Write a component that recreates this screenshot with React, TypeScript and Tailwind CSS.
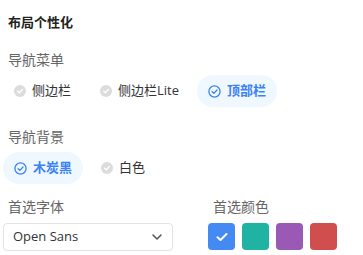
import { ChevronDown } from "lucide-react"

const font = { fontFamily: '"Open Sans", "Noto Sans CJK SC", sans-serif' }

function CheckIcon({ active }: { active: boolean }) {
  if (active) {
    return (
      <svg width="13" height="13" viewBox="0 0 14 14" className="shrink-0">
        <circle cx="7" cy="7" r="6" fill="none" stroke="#3b82f6" strokeWidth="1.4" />
        <path d="M4.4 7.2 L6.3 9 L9.7 5.4" fill="none" stroke="#3b82f6" strokeWidth="1.4" strokeLinecap="round" strokeLinejoin="round" />
      </svg>
    )
  }
  return (
    <svg width="12" height="12" viewBox="0 0 14 14" className="shrink-0">
      <circle cx="7" cy="7" r="7" fill="#dcdcdc" />
      <path d="M4.3 7.2 L6.2 9 L9.8 5.3" fill="none" stroke="#fff" strokeWidth="1.6" strokeLinecap="round" strokeLinejoin="round" />
    </svg>
  )
}

function Option({ label, active }: { label: string; active?: boolean }) {
  return (
    <button
      className={`flex h-8 items-center gap-[6px] rounded-full px-[11px] text-[13px] ${
        active ? "bg-[#eff7ff] font-bold text-[#3b82f6]" : "text-[#333]"
      }`}
    >
      <CheckIcon active={!!active} />
      <span>{label}</span>
    </button>
  )
}

const swatches = ["#4589f2", "#20b2a2", "#9b59b6", "#d14e4e"]

export default function App() {
  return (
    <div className="h-[255px] w-[363px] bg-white px-[3px]" style={font}>
      {/* Title */}
      <h2 className="pl-[5px] pt-[12px] text-[13px] font-bold leading-[20px] text-[#222]">布局个性化</h2>

      {/* Navigation menu */}
      <div className="mt-[18px] pl-[5px] text-[14px] leading-[20px] text-[#666]">导航菜单</div>
      <div className="mt-[5px] flex gap-[7px]">
        <Option label="侧边栏" />
        <Option label="侧边栏Lite" />
        <Option label="顶部栏" active />
      </div>

      {/* Navigation background */}
      <div className="mt-[20px] pl-[5px] text-[14px] leading-[20px] text-[#666]">导航背景</div>
      <div className="mt-[5px] flex gap-[7px]">
        <Option label="木炭黑" active />
        <Option label="白色" />
      </div>

      {/* Font & color */}
      <div className="mt-[13px] flex">
        <div className="w-[170px]">
          <div className="pl-[5px] text-[14px] leading-[20px] text-[#666]">首选字体</div>
          <div className="mt-[6px] flex h-[28px] items-center justify-between rounded-[4px] border border-[#e3e3e3] pl-[9px] pr-[7px] text-[13px] text-[#333]">
            <span>Open Sans</span>
            <ChevronDown size={16} strokeWidth={2.3} color="#555" />
          </div>
        </div>
        <div className="ml-[35px]">
          <div className="pl-[5px] text-[14px] leading-[20px] text-[#666]">首选颜色</div>
          <div className="mt-[6px] flex gap-[7px]">
            {swatches.map((c, i) => (
              <div
                key={c}
                className="flex h-[27px] w-[27px] items-center justify-center rounded-[4px]"
                style={{ backgroundColor: c }}
              >
                {i === 0 && (
                  <svg width="12" height="10" viewBox="0 0 12 10">
                    <path d="M1.5 5.2 L4.5 8 L10.5 2" fill="none" stroke="#fff" strokeWidth="2" strokeLinecap="round" strokeLinejoin="round" />
                  </svg>
                )}
              </div>
            ))}
          </div>
        </div>
      </div>
    </div>
  )
}
